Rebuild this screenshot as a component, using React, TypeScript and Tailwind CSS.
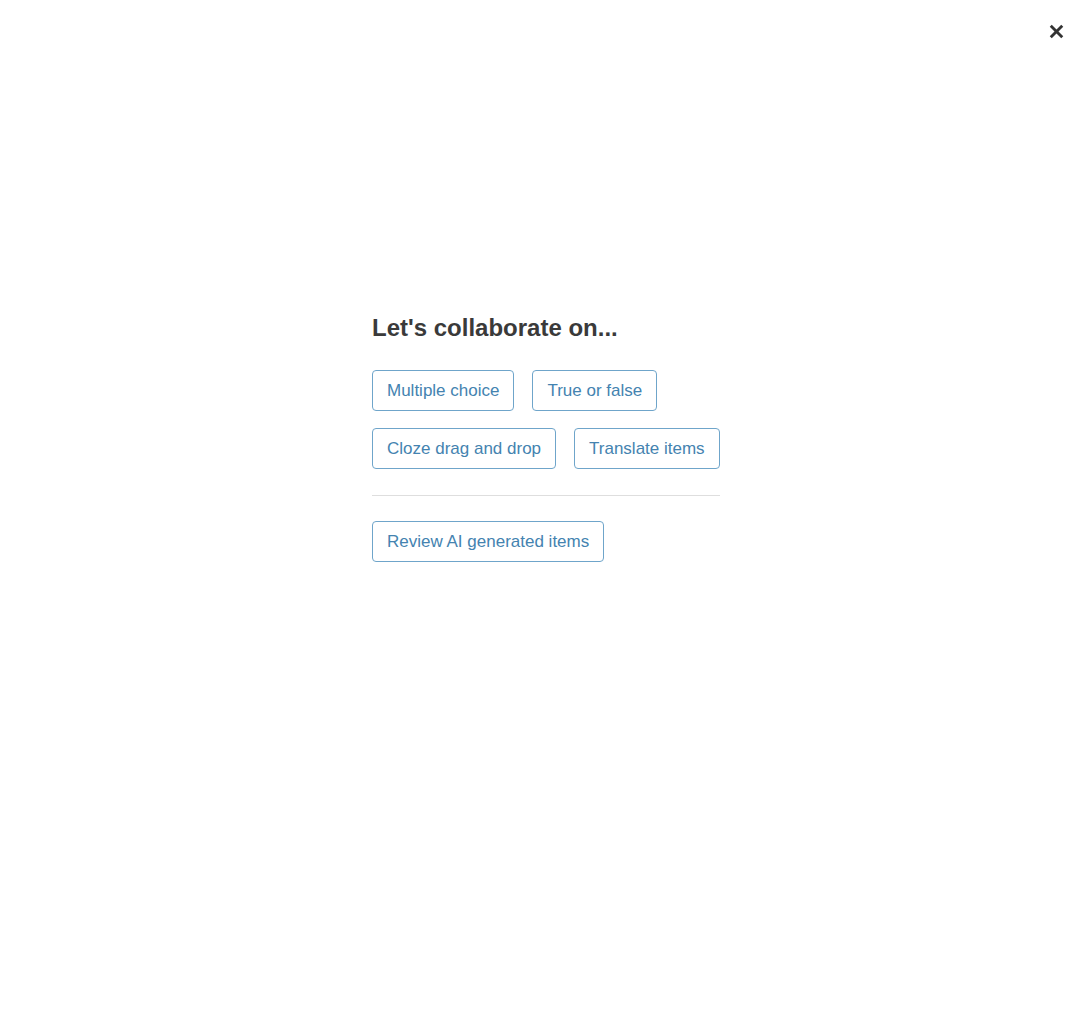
import { X } from "lucide-react";

const itemTypes = [
    { id: "mcq", label: "Multiple choice" },
    { id: "true-false", label: "True or false" },
    { id: "cloze", label: "Cloze drag and drop" },
    { id: "translate", label: "Translate items" },
];

function OptionButton({ label }: { label: string }) {
    return (
        <button
            type="button"
            className="h-[41px] px-3.5 rounded-[4px] border border-[#6fa5ca] bg-white text-[17px] leading-6 text-[#4483b0] whitespace-nowrap hover:bg-sky-50"
        >
            {label}
        </button>
    );
}

export default function App() {
    return (
        <div className="min-h-screen bg-white font-['Liberation_Sans',Arial,sans-serif]">
            <header className="flex justify-end pt-5 pr-3">
                <button type="button" aria-label="Close" className="text-[#333]">
                    <X size={23} strokeWidth={3} strokeLinecap="butt" />
                </button>
            </header>

            <main className="flex justify-center pl-3 pt-[269px]">
                <section className="w-full max-w-[348px]">
                    <h1 className="text-2xl font-bold text-[#3a3a3a]">Let's collaborate on...</h1>

                    <div className="mt-[26px] flex flex-wrap gap-x-[18px] gap-y-[17px]">
                        {itemTypes.map((item) => (
                            <OptionButton key={item.id} label={item.label} />
                        ))}
                    </div>

                    <hr className="mt-[26px] mb-[25px] border-[#dedede]" />

                    <OptionButton label="Review AI generated items" />
                </section>
            </main>
        </div>
    );
}
